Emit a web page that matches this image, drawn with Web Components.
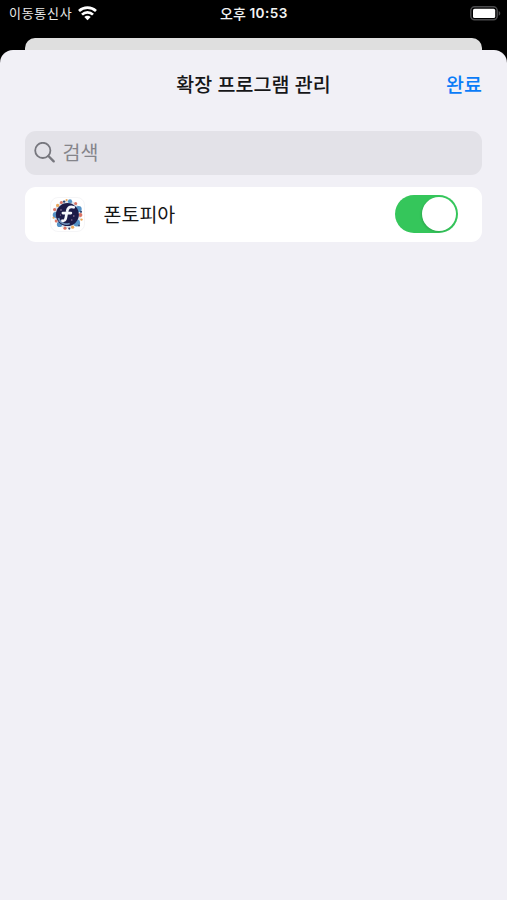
<!DOCTYPE html>
<html lang="ko">
<head>
<meta charset="utf-8">
<title>확장 프로그램 관리</title>
<style>
html,body{margin:0;height:100%;background:#000;overflow:hidden}
body{font-family:"Noto Sans CJK KR","Inter",sans-serif}
</style>
</head>
<body>
<extensions-screen></extensions-screen>
<script>
const define = (name, html) => customElements.define(name, class extends HTMLElement {
  constructor() {
    super();
    this.attachShadow({mode: 'open'}).innerHTML = html;
  }
});

define('wifi-icon', `<style>:host{display:block;width:19px;height:15px}svg{display:block}</style>
<svg width="19" height="15" viewBox="0 0 19 15" fill="none" stroke="#fff" stroke-width="2.7">
<path d="M1 5C5.8.6 13.2.6 18 5"/><path d="M4 8.6c3.1-3 7.9-3 11 0"/>
<path d="M9.5 14.3 6.3 11.1c1.7-1.7 4.7-1.7 6.4 0z" fill="#fff" stroke="none"/></svg>`);

define('battery-icon', `<style>:host{display:block;width:31px;height:15px}svg{display:block}</style>
<svg width="31" height="15" viewBox="0 0 31 15"><rect x=".8" y=".8" width="26.4" height="13" rx="3.8" fill="#000" stroke="#4b4b4d" stroke-width="1.5"/>
<rect x="3" y="2.8" width="22.2" height="9.2" rx="1.6" fill="#fff"/><path d="M28.7 5c2.1.8 2.1 3.9 0 4.7z" fill="#4b4b4d"/></svg>`);

define('status-bar', `<style>
:host{display:grid;grid-template-columns:1fr auto 1fr;align-items:center;height:27px;padding:0 6px 0 9px;box-sizing:border-box;color:#e8e8e8;font-size:13px;line-height:20px;white-space:nowrap}
.carrier{display:flex;align-items:center;gap:6px}
.carrier span{letter-spacing:.7px;width:63px;margin-top:-1px}
.time{font-weight:500;font-size:14px;color:#f2f2f2;display:flex;gap:3.5px;margin:-1px 2px 0 0}
.time b{font:600 13.6px/20px Inter,sans-serif;letter-spacing:.45px}
battery-icon{justify-self:end}
</style><div class="carrier"><span>이동통신사</span><wifi-icon></wifi-icon></div>
<div class="time"><span>오후</span><b>10:53</b></div><battery-icon></battery-icon>`);

define('sheet-header', `<style>
:host{display:grid;grid-template-columns:1fr auto 1fr;align-items:center;height:67px;padding:0 25px 1px;white-space:nowrap;color:#161618}
.title{grid-column:2;font-size:19.5px;font-weight:500;line-height:28px}
.done{justify-self:end;color:#0a7cf8;font-size:19.5px;font-weight:500;line-height:28px}
</style><span class="title"><slot name="title"></slot></span><span class="done"><slot name="action"></slot></span>`);

define('search-field', `<style>
:host{display:flex;align-items:center;height:44px;box-sizing:border-box;padding-left:9px;gap:6.5px;background:#e3e2e8;border-radius:11px;color:#85858b;font-size:19.5px;line-height:28px}
svg{display:block}
span{margin-top:-2px}
</style><svg width="22" height="22" viewBox="0 0 22 22" fill="none" stroke="#77777e" stroke-linecap="round"><circle cx="8.8" cy="8.4" r="7.6" stroke-width="1.8"/><path d="m14.4 14 5.3 5.3" stroke-width="2.4"/></svg><span><slot></slot></span>`);

define('fontopia-icon', `<style>:host{display:block;width:35px;height:35px}svg{display:block}</style>
<svg width="35" height="35" viewBox="0 0 35 35">
<rect x=".5" y=".5" width="34" height="34" rx="7.5" fill="#fff" stroke="#f5f5f7"/>
<circle cx="17.4" cy="17.4" r="13.8" fill="#dce5ed"/>
<g fill="#5592c6"><circle cx="5.7" cy="18" r="3"/><circle cx="28.6" cy="12" r="3.1"/><circle cx="26.7" cy="26" r="3.4"/><circle cx="9.5" cy="27.4" r="2.6"/><circle cx="20" cy="4.4" r="2.1"/></g>
<g fill="#db7465"><circle cx="4.6" cy="12.5" r="1.6"/><circle cx="30.4" cy="18" r="2"/><circle cx="6.2" cy="24" r="1.5"/><circle cx="15" cy="31.2" r="1.6"/><circle cx="25.7" cy="6.4" r="1.5"/><circle cx="11.3" cy="5.5" r="1.5"/></g>
<g fill="#eba85d"><circle cx="7.6" cy="8.4" r="1.6"/><circle cx="22.6" cy="30.2" r="1.6"/><circle cx="16.6" cy="3.1" r="1.1"/><circle cx="31.5" cy="22.6" r="1.2"/><circle cx="3.5" cy="20.7" r="1"/></g>
<g fill="#34456d"><circle cx="14.1" cy="4.6" r="1.2"/><circle cx="31" cy="14.8" r="1.1"/><circle cx="19.3" cy="31.6" r="1.1"/><circle cx="29" cy="28.5" r="1"/></g>
<circle cx="17.4" cy="17.6" r="11.5" fill="#1c1b48"/>
<path d="M8.4 21c1.2 4.7 6.7 7.3 11.3 5.5" fill="none" stroke="#6e91ba" stroke-width="1.7"/>
<g fill="#9e84a7"><circle cx="11" cy="13" r=".8"/><circle cx="23.8" cy="19" r=".8"/><circle cx="21.8" cy="23" r=".7"/><circle cx="10.5" cy="18" r=".6"/></g>
<path d="M23.7 10.3c-4.5-1.4-6.1.8-6.7 4.5l-1.2 6.3c-.4 2-1.5 3-3.4 2.6M12.9 16.1h8" fill="none" stroke="#f5f7fc" stroke-width="2.7" stroke-linecap="round"/>
</svg>`);

define('toggle-switch', `<style>
:host{display:flex;justify-content:flex-end;align-items:center;width:63px;height:38px;padding:2px;box-sizing:border-box;border-radius:19px;background:#35c65b}
i{width:34px;height:34px;border-radius:50%;background:#fff;box-shadow:-1px 1px 2px #0002}
</style><i></i>`);

define('extension-row', `<style>
:host{display:flex;align-items:center;height:55px;box-sizing:border-box;padding:0 24px 1px 25px;border-radius:11px;background:#fff;color:#161616;font-size:19.5px;line-height:28px}
.name{margin:-1px 0 0 18.5px;flex:1}
</style><fontopia-icon></fontopia-icon><span class="name"><slot></slot></span><toggle-switch></toggle-switch>`);

define('extensions-screen', `<style>
:host{display:flex;flex-direction:column;height:100vh;background:#000}
.back{height:12px;margin:11px 25px 0;border-radius:10px 10px 0 0;background:#dfdfdf;flex:none}
main{flex:1;background:#f1f0f6;border-radius:13px 13px 0 0}
.content{display:flex;flex-direction:column;gap:12px;padding:13px 25px 0}
</style><status-bar></status-bar><div class="back"></div><main>
<sheet-header><span slot="title">확장 프로그램 관리</span><span slot="action">완료</span></sheet-header>
<div class="content"><search-field>검색</search-field><extension-row>폰토피아</extension-row></div></main>`);
</script>
</body>
</html>
